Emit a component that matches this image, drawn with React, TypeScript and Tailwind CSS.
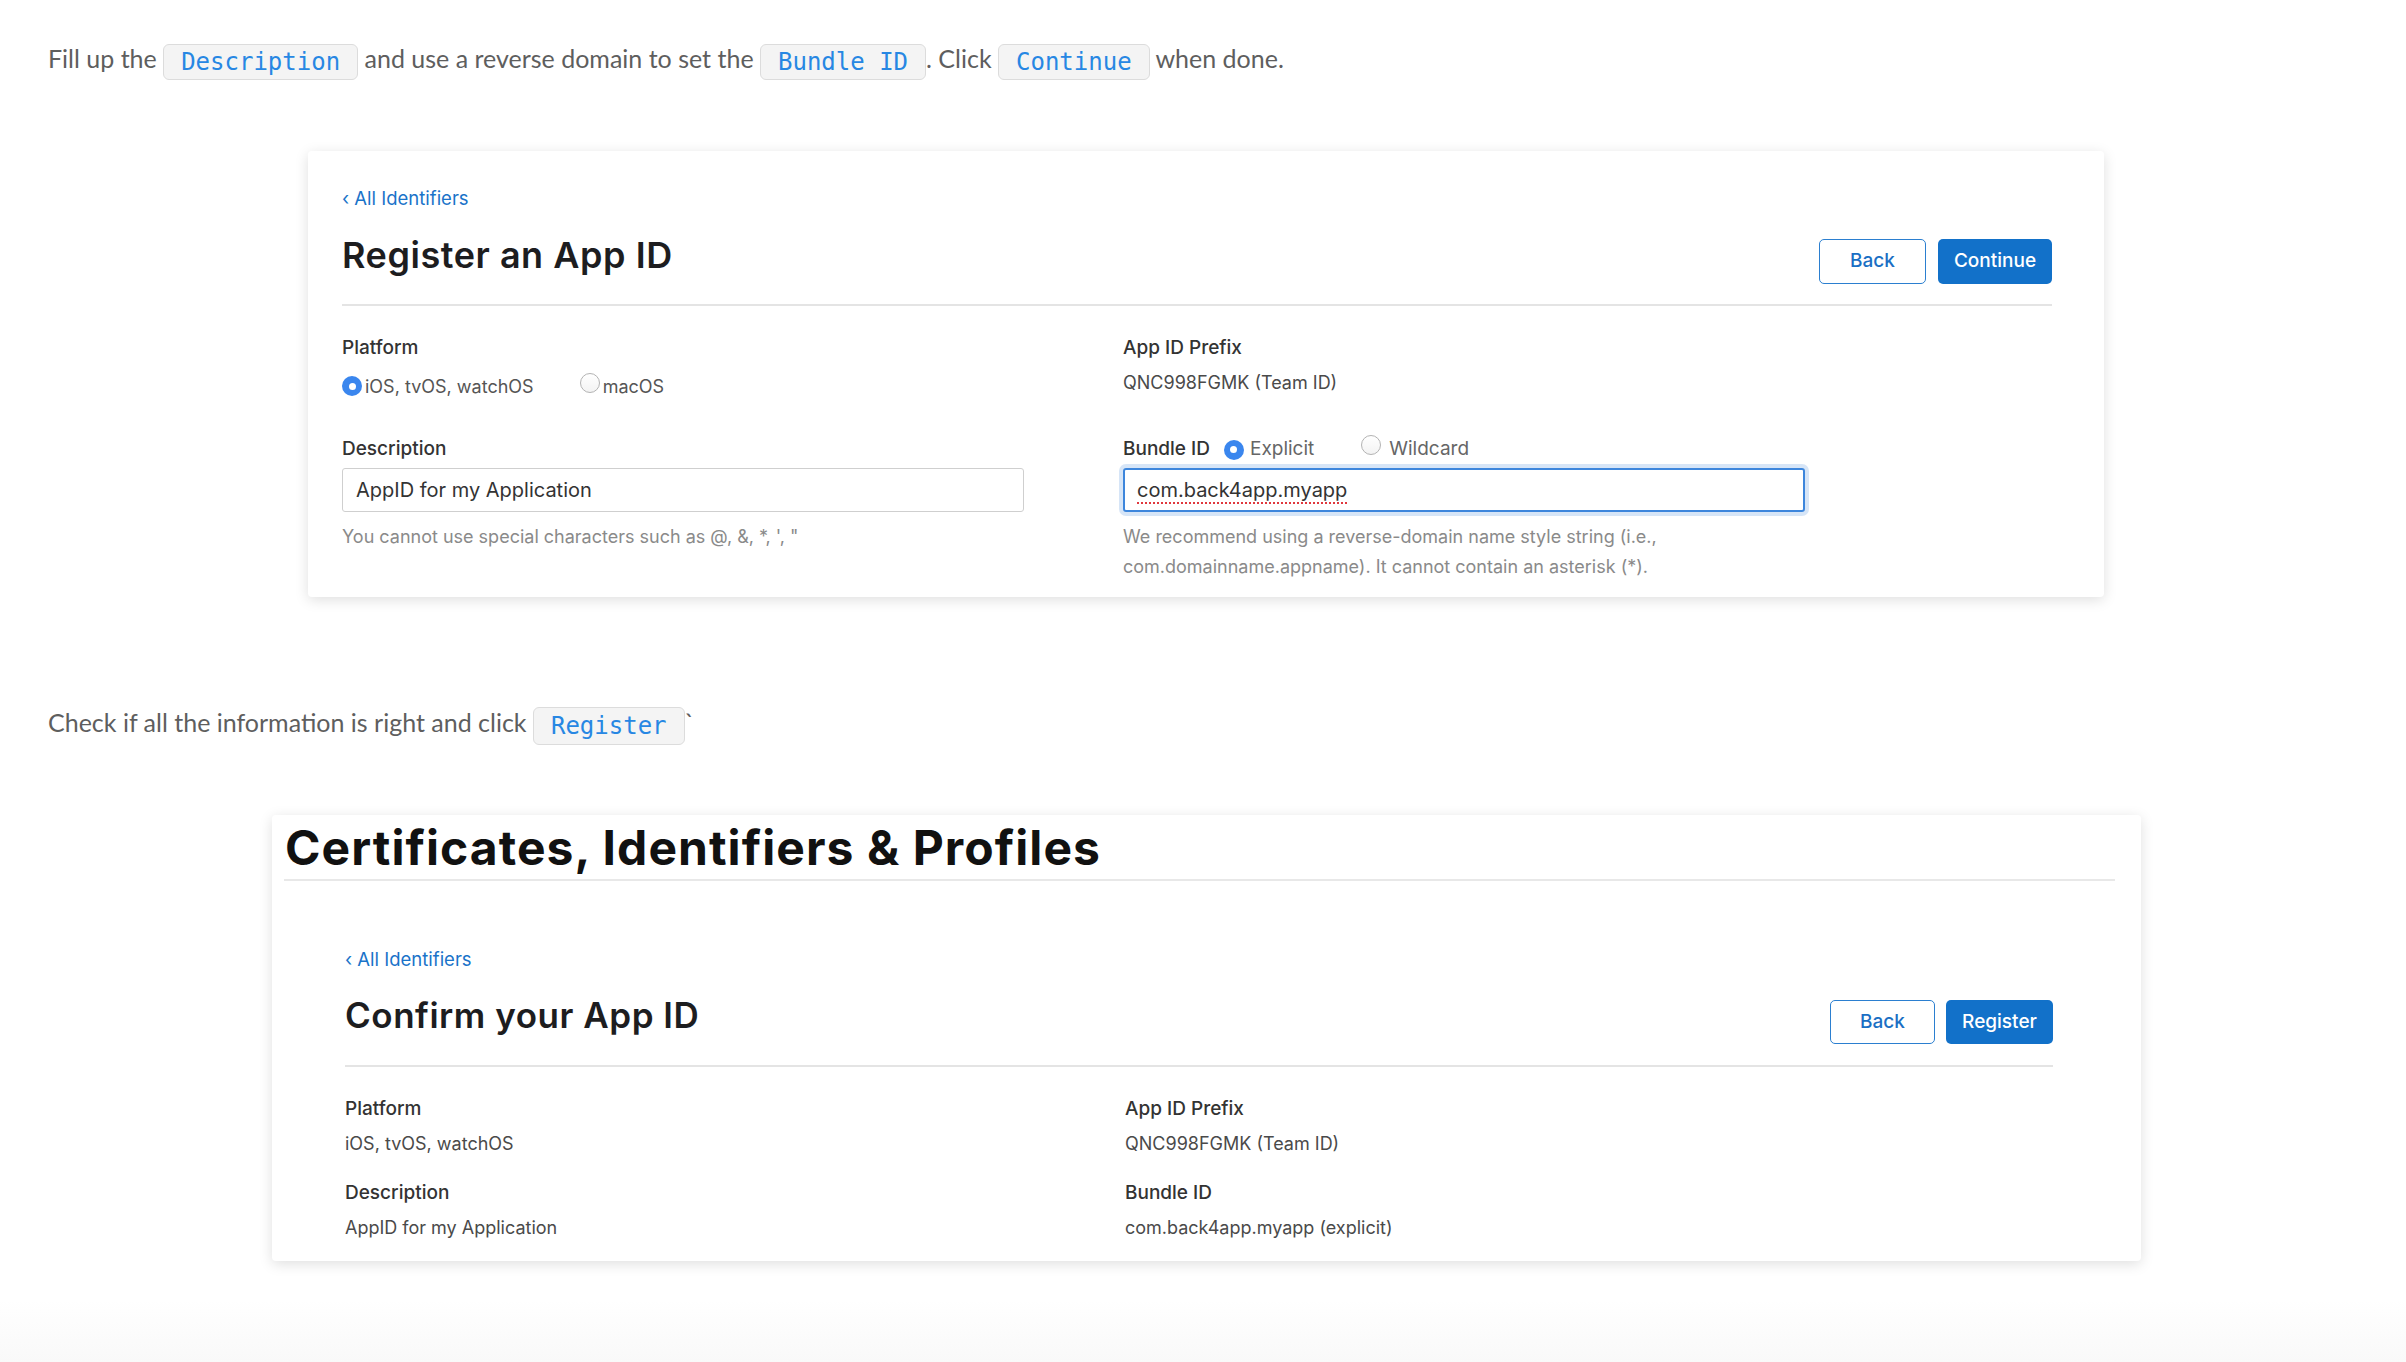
import React from "react";

const Chip = ({ children, h = "h-[36px]" }: { children: React.ReactNode; h?: string }) => (
  <span
    className={`inline-flex items-center ${h} px-[17px] align-middle rounded-[6px] border border-[#dcdcdc] bg-[#f4f4f4] text-[#2787e3] text-[24px]`}
    style={{ fontFamily: '"DejaVu Sans Mono", monospace' }}
  >
    {children}
  </span>
);

const Radio = ({ on }: { on?: boolean }) =>
  on ? (
    <span className="inline-flex items-center justify-center w-[20px] h-[20px] rounded-full bg-[#3a86ee] shrink-0">
      <span className="w-[7px] h-[7px] rounded-full bg-white" />
    </span>
  ) : (
    <span className="inline-block w-[20px] h-[20px] rounded-full border border-[#b3b3b3] bg-gradient-to-b from-white to-[#f3f3f3] shrink-0" />
  );

const Link = () => (
  <div className="text-[18.5px] leading-[24px] text-[#1a73c9]">‹ All Identifiers</div>
);

const Label = ({ children }: { children: React.ReactNode }) => (
  <div className="text-[19px] leading-[24px] font-medium text-[#333]">{children}</div>
);

const Value = ({ children, cls = "" }: { children: React.ReactNode; cls?: string }) => (
  <div className={`text-[18px] leading-[24px] text-[#4a4a4a] ${cls}`}>{children}</div>
);

export default function App() {
  const inter = { fontFamily: 'Inter, "Noto Sans", sans-serif' };
  return (
    <div
      className="min-h-[1362px] w-[2406px] bg-[linear-gradient(to_bottom,#ffffff_0px,#ffffff_1300px,#f9f9f9_1362px)]"
      style={{ fontFamily: 'Lato, "Open Sans", sans-serif' }}
    >
      <div className="pl-[48px] pt-[40px]">
        <p className="h-[36px] leading-[36px] text-[25px] text-[#5e5e5e] whitespace-nowrap">
          Fill up the <Chip>Description</Chip> and use a reverse domain to set the <Chip>Bundle ID</Chip>. Click{" "}
          <Chip>Continue</Chip> when done.
        </p>

        {/* Card 1 */}
        <div
          className="mt-[75px] ml-[260px] w-[1796px] h-[446px] bg-white rounded-[4px] shadow-[0_3px_14px_rgba(0,0,0,0.13)] pl-[34px] pr-[52px] pt-[35px]"
          style={inter}
        >
          <Link />
          <div className="mt-[29px] flex justify-between">
            <h2 className="self-start text-[36px] leading-[32px] font-semibold tracking-[0.015em] text-[#1d1d1f]">
              Register an App ID
            </h2>
            <div className="flex gap-[12px]">
              <button className="w-[107px] h-[45px] rounded-[5px] border-[1.5px] border-[#2b7fd0] text-[#1a6fc4] text-[19px] font-medium">
                Back
              </button>
              <button className="w-[114px] h-[45px] rounded-[5px] bg-[#1271c9] text-white text-[19px] font-medium">
                Continue
              </button>
            </div>
          </div>
          <div className="mt-[20px] h-[2px] bg-[#e4e4e4]" />
          <div className="flex">
            <div className="w-[781px]">
              <div className="mt-[30px]">
                <Label>Platform</Label>
              </div>
              <div className="mt-[14px] flex items-center h-[24px] text-[18px] text-[#555]">
                <Radio on />
                <span className="ml-[3px]">iOS, tvOS, watchOS</span>
                <span className="ml-[46px]">
                  <Radio />
                </span>
                <span className="ml-[3px]">macOS</span>
              </div>
              <div className="mt-[39px]">
                <Label>Description</Label>
              </div>
              <div className="mt-[7px] w-[682px] h-[44px] rounded-[3px] border border-[#cfcfcf] flex items-center px-[13px] text-[20px] text-[#333]">
                AppID for my Application
              </div>
              <div className="mt-[10px] text-[18px] leading-[30px] text-[#8a8a8a]">
                You cannot use special characters such as @, &amp;, *, ', "
              </div>
            </div>
            <div className="flex-1">
              <div className="mt-[30px]">
                <Label>App ID Prefix</Label>
              </div>
              <Value cls="mt-[11px]">QNC998FGMK (Team ID)</Value>
              <div className="mt-[42px] flex items-center h-[24px]">
                <Label>Bundle ID</Label>
                <span className="ml-[14px] -mt-[3px]">
                  <Radio on />
                </span>
                <span className="ml-[6px] text-[19px] text-[#666]">Explicit</span>
                <span className="ml-[47px] -mt-[3px]">
                  <Radio />
                </span>
                <span className="ml-[8px] text-[19px] text-[#666]">Wildcard</span>
              </div>
              <div className="mt-[7px] w-[682px] h-[44px] rounded-[3px] border-2 border-[#3d86dc] shadow-[0_0_0_4px_rgba(120,170,230,0.3)] flex items-center px-[12px] text-[20px] text-[#333]">
                <span className="underline decoration-dotted decoration-[#e0383e] decoration-2 underline-offset-[5px]">
                  com.back4app.myapp
                </span>
              </div>
              <div className="mt-[10px] text-[18px] leading-[30px] text-[#8a8a8a]">
                We recommend using a reverse-domain name style string (i.e.,
                <br />
                com.domainname.appname). It cannot contain an asterisk (*).
              </div>
            </div>
          </div>
        </div>

        <p className="mt-[106px] h-[38px] leading-[38px] text-[25px] text-[#5e5e5e] whitespace-nowrap">
          Check if all the information is right and click <Chip h="h-[38px]">Register</Chip>`
        </p>

        {/* Card 2 */}
        <div
          className="mt-[74px] ml-[224px] w-[1869px] h-[446px] bg-white rounded-[4px] shadow-[0_3px_14px_rgba(0,0,0,0.13)] pt-[10px]"
          style={inter}
        >
          <div className="pl-[13px] text-[48px] leading-[46px] font-bold tracking-[0.022em] text-[#111]">
            Certificates, Identifiers &amp; Profiles
          </div>
          <div className="mt-[8px] ml-[12px] mr-[26px] h-[2px] bg-[#e8e8e8]" />
          <div className="pl-[73px] pr-[88px]">
            <div className="mt-[66px]">
              <Link />
            </div>
            <div className="mt-[29px] flex justify-between">
              <h2 className="self-start text-[35px] leading-[30px] font-semibold tracking-[0.015em] text-[#1d1d1f]">
                Confirm your App ID
              </h2>
              <div className="flex gap-[11px]">
                <button className="w-[105px] h-[44px] rounded-[5px] border-[1.5px] border-[#2b7fd0] text-[#1a6fc4] text-[19px] font-medium">
                  Back
                </button>
                <button className="w-[107px] h-[44px] rounded-[5px] bg-[#1271c9] text-white text-[19px] font-medium">
                  Register
                </button>
              </div>
            </div>
            <div className="mt-[21px] h-[2px] bg-[#e4e4e4]" />
            <div className="flex">
              <div className="w-[780px]">
                <div className="mt-[30px]">
                  <Label>Platform</Label>
                </div>
                <Value cls="mt-[11px]">iOS, tvOS, watchOS</Value>
                <div className="mt-[25px]">
                  <Label>Description</Label>
                </div>
                <Value cls="mt-[11px]">AppID for my Application</Value>
              </div>
              <div className="flex-1">
                <div className="mt-[30px]">
                  <Label>App ID Prefix</Label>
                </div>
                <Value cls="mt-[11px]">QNC998FGMK (Team ID)</Value>
                <div className="mt-[25px]">
                  <Label>Bundle ID</Label>
                </div>
                <Value cls="mt-[11px]">com.back4app.myapp (explicit)</Value>
              </div>
            </div>
          </div>
        </div>
      </div>
    </div>
  );
}
